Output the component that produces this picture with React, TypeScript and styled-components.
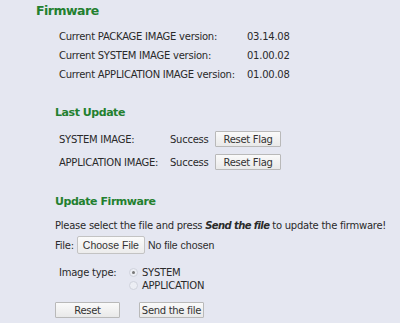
import React from "react";
import styled, { createGlobalStyle } from "styled-components";

const Global = createGlobalStyle`
  html, body { margin: 0; padding: 0; background: #e5e7f1; }
  body {
    font-family: "DejaVu Sans", Verdana, sans-serif;
    font-size: 10px;
    letter-spacing: -0.25px;
    color: #2a2a2a;
  }
`;

const Page = styled.div`
  width: 400px;
  height: 323px;
  overflow: hidden;
  padding: 3px 0 0 36px;
  box-sizing: border-box;
`;

const Title = styled.h1`
  margin: 0;
  font-size: 12.5px;
  letter-spacing: -0.5px;
  font-weight: bold;
  color: #23802f;
  line-height: 16px;
`;

const SubTitle = styled.h2<{ $top: number }>`
  margin: ${(p) => p.$top}px 0 0 19px;
  font-size: 11px;
  letter-spacing: -0.45px;
  font-weight: bold;
  color: #23802f;
  line-height: 14px;
`;

const Versions = styled.div`
  display: grid;
  grid-template-columns: 188px auto;
  row-gap: 5px;
  margin: 11px 0 0 23px;
  line-height: 14px;
`;

const Flags = styled.div`
  display: grid;
  grid-template-columns: 111px 45px auto;
  row-gap: 7px;
  margin: 11px 0 0 23px;
  align-items: center;
`;

const Button = styled.button<{ $w: number }>`
  width: ${(p) => p.$w}px;
  height: 16px;
  padding: 0;
  white-space: nowrap;
  font-family: "DejaVu Sans", Verdana, sans-serif;
  font-size: 10px;
  letter-spacing: -0.3px;
  color: #333;
  background: linear-gradient(#fafafa, #e9e9e9);
  border: 1px solid #b9b9b9;
  border-radius: 1px;
`;

const Para = styled.div`
  margin: 10px 0 0 19px;
  line-height: 14px;
  white-space: nowrap;
  b { letter-spacing: -0.6px; }
`;

const FileRow = styled.div`
  display: flex;
  align-items: center;
  gap: 3px;
  margin: 3px 0 0 19px;
`;

const FileButton = styled.button`
  height: 18px;
  padding: 0 5px;
  font-family: "Liberation Sans", Arial, sans-serif;
  font-size: 10.5px;
  letter-spacing: 0;
  color: #333;
  background: linear-gradient(#fbfbfb, #ececec);
  border: 1px solid #c3c3c3;
  border-radius: 2px;
`;

const NoFile = styled.span`
  font-family: "Liberation Sans", Arial, sans-serif;
  font-size: 10.5px;
  letter-spacing: 0;
`;

const TypeRow = styled.div`
  display: grid;
  grid-template-columns: 70px auto;
  margin: 12px 0 0 23px;
  line-height: 13px;
`;

const Radios = styled.div`
  display: flex;
  flex-direction: column;
`;

const RadioLine = styled.label`
  display: flex;
  align-items: center;
  gap: 4px;
  height: 13px;
`;

const Radio = styled.span<{ $on?: boolean }>`
  width: 9px;
  height: 9px;
  border-radius: 50%;
  border: 1px solid #cfd2dc;
  background: #eceef4;
  box-sizing: border-box;
  display: flex;
  align-items: center;
  justify-content: center;
  &::after {
    content: "";
    width: 3px;
    height: 3px;
    border-radius: 50%;
    background: ${(p) => (p.$on ? "#777" : "transparent")};
  }
`;

const Actions = styled.div`
  display: flex;
  gap: 19px;
  margin: 10px 0 0 19px;
`;

export default function App() {
  return (
    <>
      <Global />
      <Page>
        <Title>Firmware</Title>
        <Versions>
          <span>Current PACKAGE IMAGE version:</span>
          <span>03.14.08</span>
          <span>Current SYSTEM IMAGE version:</span>
          <span>01.00.02</span>
          <span>Current APPLICATION IMAGE version:</span>
          <span>01.00.08</span>
        </Versions>
        <SubTitle $top={24}>Last Update</SubTitle>
        <Flags>
          <span>SYSTEM IMAGE:</span>
          <span>Success</span>
          <Button $w={66}>Reset Flag</Button>
          <span>APPLICATION IMAGE:</span>
          <span>Success</span>
          <Button $w={66}>Reset Flag</Button>
        </Flags>
        <SubTitle $top={25}>Update Firmware</SubTitle>
        <Para>
          Please select the file and press <b><i>Send the file</i></b> to update the firmware!
        </Para>
        <FileRow>
          <span>File:</span>
          <FileButton>Choose File</FileButton>
          <NoFile>No file chosen</NoFile>
        </FileRow>
        <TypeRow>
          <span>Image type:</span>
          <Radios>
            <RadioLine>
              <Radio $on />
              SYSTEM
            </RadioLine>
            <RadioLine>
              <Radio />
              APPLICATION
            </RadioLine>
          </Radios>
        </TypeRow>
        <Actions>
          <Button $w={65}>Reset</Button>
          <Button $w={65}>Send the file</Button>
        </Actions>
      </Page>
    </>
  );
}
